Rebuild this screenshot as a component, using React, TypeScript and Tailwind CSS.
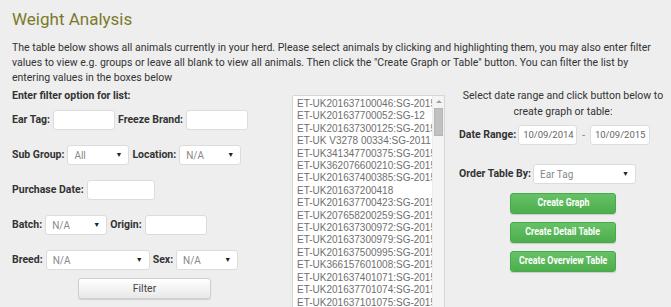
import { ReactNode } from 'react';

const animals = [
  'ET-UK201637100046:SG-2015',
  'ET-UK201637700052:SG-12',
  'ET-UK201637300125:SG-2015',
  'ET-UK V3278 00334:SG-2011',
  'ET-UK341347700375:SG-2015',
  'ET-UK362076600210:SG-2015',
  'ET-UK201637400385:SG-2015',
  'ET-UK201637200418',
  'ET-UK201637700423:SG-2015',
  'ET-UK207658200259:SG-2015',
  'ET-UK201637300972:SG-2015',
  'ET-UK201637300979:SG-2015',
  'ET-UK201637500995:SG-2015',
  'ET-UK366157601008:SG-2015',
  'ET-UK201637401071:SG-2015',
  'ET-UK201637701074:SG-2015',
  'ET-UK201637101075:SG-2015',
];

function Label({ children }: { children: ReactNode }) {
  return <span className="text-[10.5px] font-bold text-[#333] whitespace-nowrap">{children}</span>;
}

function TextBox({ w, value }: { w: string; value?: string }) {
  return (
    <div
      className={`${w} h-[20px] shrink-0 bg-white border border-[#dcdcdc] rounded-[3px] flex items-center px-[4px] text-[9.5px] text-[#666]`}
    >
      {value}
    </div>
  );
}

function Dropdown({ w, value }: { w: string; value: string }) {
  return (
    <div
      className={`${w} h-[20px] shrink-0 bg-white border border-[#dcdcdc] rounded-[3px] flex items-center justify-between pl-[6px] pr-[6px] text-[10px] text-[#888]`}
    >
      <span>{value}</span>
      <span className="text-[7px] text-[#222]">▼</span>
    </div>
  );
}

function GreenButton({ children }: { children: ReactNode }) {
  return (
    <button className="w-[106px] h-[21px] rounded-[3px] border border-[#4aa84a] bg-gradient-to-b from-[#66c266] to-[#4cae4c] text-white text-[11px] font-bold shadow-[0_1px_1px_rgba(0,0,0,0.15)] flex items-center justify-center">
      <span className="inline-block whitespace-nowrap scale-x-[0.8]">{children}</span>
    </button>
  );
}

export default function App() {
  return (
    <div className="w-[671px] h-[307px] overflow-hidden bg-[#eeeeee] font-['Roboto',sans-serif] text-[#333]">
      <div className="px-3 pt-[8px]">
        <h1 className="text-[17px] leading-[22px] text-[#7b7a2b]">Weight Analysis</h1>
        <p className="mt-[10px] text-[10.5px] leading-[15px] w-[645px]">
          The table below shows all animals currently in your herd. Please select animals by clicking and highlighting them, you may also enter filter values to view e.g. groups or leave all blank to view all animals. Then click the "Create Graph or Table" button. You can filter the list by entering values in the boxes below
        </p>
      </div>

      <div className="flex mt-[3px]">
        {/* filters */}
        <div className="w-[292px] pl-3 flex flex-col">
          <div className="h-[15px] flex items-center">
            <Label>Enter filter option for list:</Label>
          </div>
          <div className="mt-[7px] flex flex-col gap-[15px]">
            <div className="flex items-center gap-[3px]">
              <Label>Ear Tag:</Label>
              <TextBox w="w-[62px]" />
              <Label>Freeze Brand:</Label>
              <TextBox w="w-[62px]" />
            </div>
            <div className="flex items-center gap-[3px]">
              <Label>Sub Group:</Label>
              <Dropdown w="w-[62px]" value="All" />
              <Label>Location:</Label>
              <Dropdown w="w-[62px]" value="N/A" />
            </div>
            <div className="flex items-center gap-[3px]">
              <Label>Purchase Date:</Label>
              <TextBox w="w-[68px]" />
            </div>
            <div className="flex items-center gap-[3px]">
              <Label>Batch:</Label>
              <Dropdown w="w-[62px]" value="N/A" />
              <Label>Origin:</Label>
              <TextBox w="w-[62px]" />
            </div>
            <div className="flex items-center gap-[3px]">
              <Label>Breed:</Label>
              <Dropdown w="w-[104px]" value="N/A" />
              <Label>Sex:</Label>
              <Dropdown w="w-[62px]" value="N/A" />
            </div>
          </div>
          <button className="mt-[8px] ml-[66px] w-[133px] h-[21px] rounded-[3px] border border-[#cfcfcf] bg-gradient-to-b from-white to-[#e8e8e8] text-[10.5px] text-[#444] shadow-[0_1px_1px_rgba(0,0,0,0.12)]">
            Filter
          </button>
        </div>

        {/* animal list */}
        <div className="relative mt-[7px] w-[153px] h-[240px] bg-white border border-[#d6d6d6] rounded-tl-[2px] overflow-hidden">
          <div className="pt-[2px] pl-[4px] pr-[12px] font-['Liberation_Sans',Arial,sans-serif] text-[10px] leading-[12.4px] text-[#6f6f6f]">
            {animals.map((a) => (
              <div key={a} className="whitespace-nowrap overflow-hidden">
                {a}
              </div>
            ))}
          </div>
          <div className="absolute right-0 top-0 bottom-0 w-[12px] bg-[#f4f4f4] border-l border-[#ececec]">
            <div className="h-[11px] flex items-center justify-center">
              <span className="block w-0 h-0 border-l-[3px] border-r-[3px] border-b-[3px] border-l-transparent border-r-transparent border-b-[#a0a0a0]" />
            </div>
            <div className="mx-[1px] mt-[1px] h-[28px] bg-[#c1c1c1] border border-[#b5b5b5]" />
          </div>
        </div>

        {/* graph options */}
        <div className="flex-1 pl-[14px] pr-[4px] flex flex-col">
          <p className="text-center text-[10.5px] leading-[16px]">
            Select date range and click button below to create graph or table:
          </p>
          <div className="mt-[5px] flex items-center gap-[2px]">
            <Label>Date Range:</Label>
            <TextBox w="w-[59px]" value="10/09/2014" />
            <span className="mx-[3px] text-[10px] text-[#777]">-</span>
            <TextBox w="w-[60px]" value="10/09/2015" />
          </div>
          <div className="mt-[19px] flex items-center gap-[2px]">
            <Label>Order Table By:</Label>
            <Dropdown w="w-[103px]" value="Ear Tag" />
          </div>
          <div className="mt-[9px] flex flex-col items-center gap-[8px]">
            <GreenButton>Create Graph</GreenButton>
            <GreenButton>Create Detail Table</GreenButton>
            <GreenButton>Create Overview Table</GreenButton>
          </div>
        </div>
      </div>
    </div>
  );
}
